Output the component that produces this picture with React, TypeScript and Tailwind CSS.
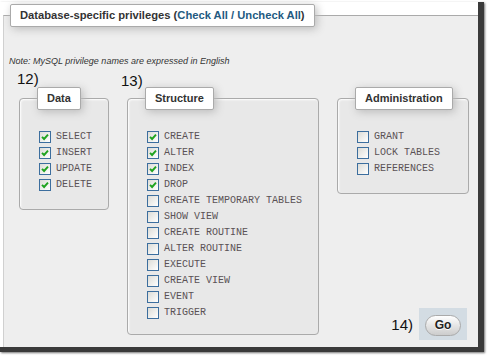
import React from 'react';

type Priv = { name: string; on?: boolean };

const data: Priv[] = [
  { name: 'SELECT', on: true },
  { name: 'INSERT', on: true },
  { name: 'UPDATE', on: true },
  { name: 'DELETE', on: true },
];

const structure: Priv[] = [
  { name: 'CREATE', on: true },
  { name: 'ALTER', on: true },
  { name: 'INDEX', on: true },
  { name: 'DROP', on: true },
  { name: 'CREATE TEMPORARY TABLES' },
  { name: 'SHOW VIEW' },
  { name: 'CREATE ROUTINE' },
  { name: 'ALTER ROUTINE' },
  { name: 'EXECUTE' },
  { name: 'CREATE VIEW' },
  { name: 'EVENT' },
  { name: 'TRIGGER' },
];

const admin: Priv[] = [{ name: 'GRANT' }, { name: 'LOCK TABLES' }, { name: 'REFERENCES' }];

const Check = ({ on }: { on?: boolean }) => (
  <span className="w-[12px] h-[12px] shrink-0 border border-[#3c6e9e] bg-linear-to-br from-[#dcdcd7] to-white flex items-center justify-center">
    {on && (
      <svg width="8" height="8" viewBox="0 0 8 8">
        <path d="M1 3.8 L3.1 6 L7 1.6" stroke="#1fa31f" strokeWidth="1.9" fill="none" />
      </svg>
    )}
  </span>
);

const Group = ({ title, items, w, pb }: { title: string; items: Priv[]; w: string; pb: string }) => (
  <fieldset className={`${w} ${pb} shrink-0 border border-[#aaa] rounded-[4px] bg-[#e8e8e8] shadow-[inset_1px_1px_2px_#fff]`}>
    <legend className="ml-[17px] px-[9px] py-[4px] bg-white border border-[#aaa] rounded-[2px] shadow-[2px_2px_8px_#bbb] text-[11px] leading-[13px] font-bold text-[#333]">
      {title}
    </legend>
    <div className="pl-[19px] pt-[19px]">
      {items.map(p => (
        <label key={p.name} className="flex items-center gap-[5px] h-[16px]">
          <Check on={p.on} />
          <span className="font-['Liberation_Mono',monospace] text-[10px] leading-[16px] text-[#5a5255] whitespace-pre">{p.name}</span>
        </label>
      ))}
    </div>
  </fieldset>
);

export default function App() {
  return (
    <div className="w-[490px] h-[360px] bg-white relative pt-[2px] font-['Liberation_Sans',Arial,sans-serif] overflow-hidden">
      <div className="w-[484px] h-[350px] border-r-[6px] border-b-[5px] border-[#3a3a3a] shadow-[1px_1px_2px_rgba(0,0,0,0.55)] bg-white pl-[3px] pt-[2px]">
        <fieldset className="h-[343px] border-t border-l border-[#aaa] border-l-[#d0d0d0] bg-[#eee]">
          <legend className="ml-[6px] px-[9px] py-[4px] bg-white border border-[#aaa] rounded-[2px] shadow-[2px_2px_8px_#bbb] text-[11.2px] leading-[13px] font-bold text-[#333]">
            Database-specific privileges (<span className="text-[#235a81]">Check All / Uncheck All</span>)
          </legend>

          <p className="ml-[5px] mt-[29px] text-[9px] leading-[11px] italic text-[#333]">
            Note: MySQL privilege names are expressed in English
          </p>

          <div className="ml-[15px] mt-[20px] flex items-start gap-[18px]">
            <Group title="Data" items={data} w="w-[90px]" pb="pb-[16px]" />
            <Group title="Structure" items={structure} w="w-[192px]" pb="pb-[13px]" />
            <div className="w-[132px] flex flex-col">
              <Group title="Administration" items={admin} w="w-[132px]" pb="pb-[16px]" />
              <div className="mt-[114px] mr-[2px] flex items-center justify-end gap-[6px]">
                <span className="text-[15px] leading-[17px] text-[#111]">14)</span>
                <div className="bg-[#d3dce3] px-[6px] py-[4px]">
                  <button className="w-[36px] h-[21px] rounded-full border border-[#aaa] bg-linear-to-b from-white to-[#ccc] text-[12px] font-bold text-[#222] [text-shadow:0_1px_0_#fff]">
                    Go
                  </button>
                </div>
              </div>
            </div>
          </div>
        </fieldset>
      </div>

      <span className="absolute left-[17px] top-[70px] text-[15px] leading-[17px] text-[#111]">12)</span>
      <span className="absolute left-[121px] top-[72px] text-[15px] leading-[17px] text-[#111]">13)</span>
    </div>
  );
}
